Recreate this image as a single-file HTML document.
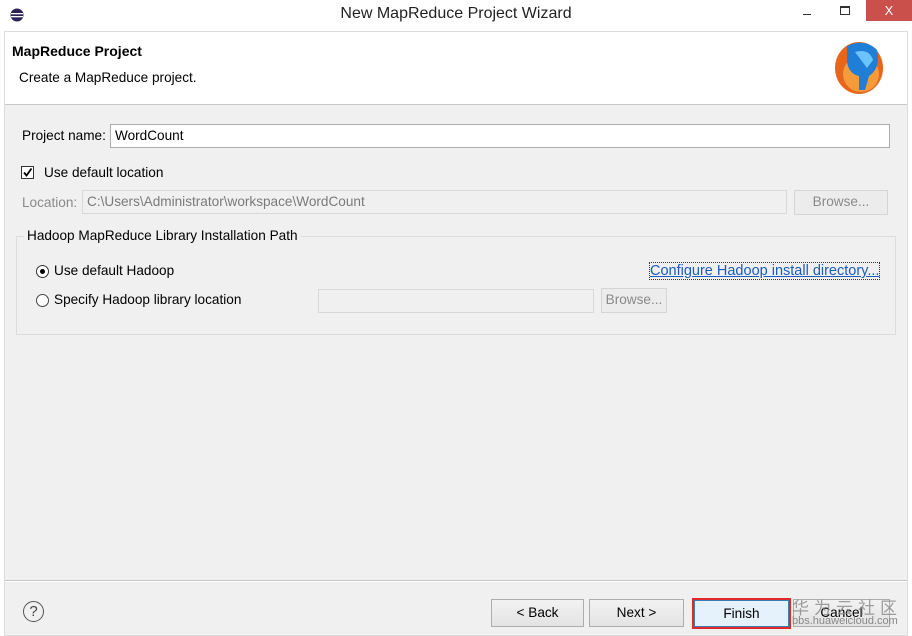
<!DOCTYPE html>
<html><head><style>
*{box-sizing:border-box;margin:0;padding:0}
body{width:912px;height:636px;background:#fff;font-family:"Liberation Sans",sans-serif;font-size:13.6px;color:#000;position:relative;overflow:hidden}
.a{position:absolute}
.fld{position:absolute;border:1px solid #abadb3;background:#fff;padding:2px 4px;font-size:13.6px;line-height:17px}
.dis{background:#f0f0f0;border-color:#d9d9d9;color:#7a7a7a}
.btn{position:absolute;border:1px solid #adadad;background:linear-gradient(#f2f2f2,#e3e3e3);text-align:center;font-size:13.6px;line-height:26px}
.bdis{border-color:#d5d5d5;background:#ececec;color:#8a8a8a;line-height:22px}
</style></head><body>
<div class="a" style="left:0;top:0;width:912px;height:31px;background:#fff"></div>
<svg class="a" style="left:10px;top:8px" width="14" height="14"><circle cx="7" cy="7" r="6.5" fill="#2c2255"/><rect x="1" y="5" width="12" height="1.3" fill="#fff"/><rect x="1" y="8" width="12" height="1.3" fill="#fff"/></svg>
<div class="a" style="left:0;top:5px;width:912px;text-align:center;font-size:16px;color:#222">New MapReduce Project Wizard</div>
<div class="a" style="left:803px;top:14px;width:8px;height:1px;background:#333"></div>
<div class="a" style="left:840px;top:6px;width:10px;height:9px;border:1px solid #333;border-top-width:2px"></div>
<div class="a" style="left:866px;top:0;width:46px;height:21px;background:#c9504b;color:#fff;text-align:center;font-size:13px;line-height:21px">X</div>
<div class="a" style="left:4px;top:31px;width:904px;height:605px;background:#f0f0f0;border:1px solid #dcdcdc"></div>
<div class="a" style="left:5px;top:32px;width:902px;height:73px;background:#fff;border-bottom:1px solid #c8c8c8"></div>
<div class="a" style="left:12px;top:43px;font-weight:bold;font-size:14px">MapReduce Project</div>
<div class="a" style="left:19px;top:70px">Create a MapReduce project.</div>
<svg class="a" style="left:825px;top:38px" width="62" height="58"><ellipse cx="34" cy="30" rx="24" ry="26" fill="#e8661c"/><ellipse cx="36" cy="36" rx="18" ry="18" fill="#f59b3a"/><path d="M22 8 Q40 0 52 12 Q56 30 44 38 L40 52 L34 52 L34 38 Q24 36 22 24 Z" fill="#1f7fd8"/><path d="M30 14 Q44 10 48 22 L42 30 Z" fill="#6bc4ff"/></svg>
<div class="a" style="left:22px;top:128px">Project name:</div>
<div class="fld" style="left:110px;top:124px;width:780px;height:24px">WordCount</div>
<div class="a" style="left:21px;top:166px;width:13px;height:13px;border:1px solid #333;background:#fff"><svg width="11" height="11" style="display:block"><path d="M2 5.5 L4.5 8.5 L9.5 1.5" stroke="#000" stroke-width="1.8" fill="none"/></svg></div>
<div class="a" style="left:44px;top:165px">Use default location</div>
<div class="a" style="left:22px;top:195px;color:#8a8a8a">Location:</div>
<div class="fld dis" style="left:82px;top:190px;width:705px;height:24px">C:\Users\Administrator\workspace\WordCount</div>
<div class="btn bdis" style="left:794px;top:190px;width:94px;height:25px">Browse...</div>
<div class="a" style="left:16px;top:236px;width:880px;height:99px;border:1px solid #dcdcdc"></div>
<div class="a" style="left:24px;top:228px;background:#f0f0f0;padding:0 3px">Hadoop MapReduce Library Installation Path</div>
<div class="a" style="left:36px;top:265px;width:13px;height:13px;border:1px solid #333;border-radius:50%;background:#fff"><div style="margin:3px;width:5px;height:5px;border-radius:50%;background:#000"></div></div>
<div class="a" style="left:54px;top:263px">Use default Hadoop</div>
<div class="a" style="left:650px;top:263px;color:#1a5bbd;text-decoration:underline;outline:1px dotted #333;font-size:14.5px">Configure Hadoop install directory...</div>
<div class="a" style="left:36px;top:294px;width:13px;height:13px;border:1px solid #444;border-radius:50%;background:#fff"></div>
<div class="a" style="left:54px;top:292px">Specify Hadoop library location</div>
<div class="fld dis" style="left:318px;top:289px;width:276px;height:24px"></div>
<div class="btn bdis" style="left:601px;top:288px;width:66px;height:25px">Browse...</div>
<div class="a" style="left:5px;top:580px;width:902px;height:1px;background:#c8c8c8"></div>
<div class="a" style="left:5px;top:581px;width:902px;height:1px;background:#fff"></div>
<div class="a" style="left:23px;top:601px;width:21px;height:21px;border:1px solid #555;border-radius:50%;text-align:center;font-size:15px;line-height:19px;color:#444">?</div>
<div class="btn" style="left:491px;top:599px;width:93px;height:28px">&lt; Back</div>
<div class="btn" style="left:589px;top:599px;width:95px;height:28px">Next &gt;</div>
<div class="btn" style="left:694px;top:600px;width:95px;height:27px;background:#e5f1fb;border-color:#3c7fb1">Finish</div>
<div class="a" style="left:692px;top:598px;width:99px;height:31px;border:2px solid #e02a2a"></div>
<div class="btn" style="left:793px;top:599px;width:97px;height:28px">Cancel</div>
<div class="a" style="left:792px;top:594px;font-family:'Noto Sans CJK SC',sans-serif;font-size:17px;color:#888;letter-spacing:5px;opacity:.8">华为云社区</div>
<div class="a" style="left:792px;top:615px;font-size:11px;color:#888">bbs.huaweicloud.com</div>
</body></html>
